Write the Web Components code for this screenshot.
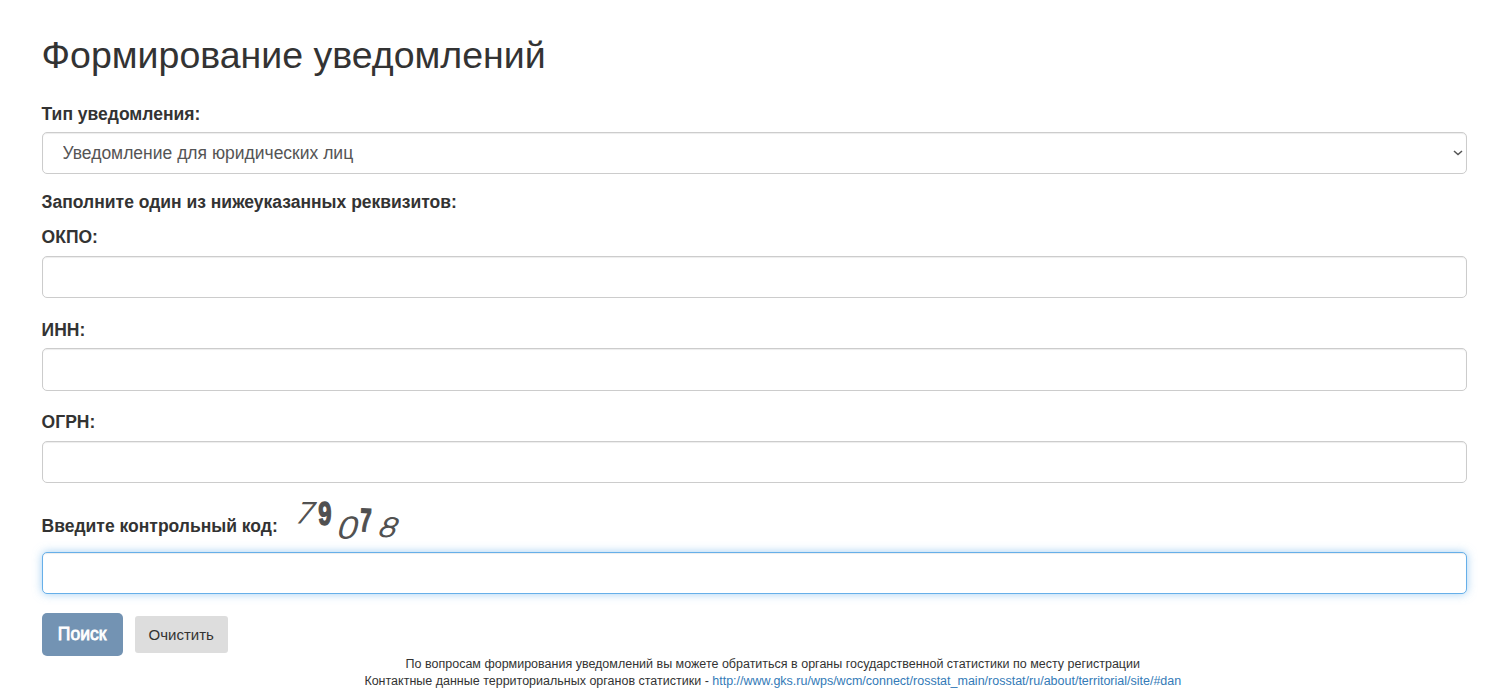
<!DOCTYPE html>
<html lang="ru">
<head>
<meta charset="utf-8">
<title>Формирование уведомлений</title>
<style>
    body {
        margin: 0;
        background: #fff;
        color: #333;
        font: 17.5px/25px "Liberation Sans", Arial, sans-serif;
    }
</style>
</head>
<body>
<notice-page></notice-page>

<script>
/**
 * Labelled form row; the control goes into the default slot,
 * anything beside the label goes into the "hint" slot
 */
class FormField extends HTMLElement {
    constructor() {
        super();
        this.attachShadow({ mode: 'open' });
        this.shadowRoot.innerHTML = `
            <style>
                :host {
                    display: block;
                    margin-bottom: 18.75px;
                }
                .head {
                    display: flex;
                    align-items: flex-end;
                    margin-bottom: 5.65px;
                }
                label {
                    padding: .6px 0 var(--label-lift, 0);
                    font-weight: bold;
                }
            </style>
            <div class="head"><label></label><slot name="hint"></slot></div>
            <slot></slot>
        `;
        this.shadowRoot.querySelector('label').textContent = this.getAttribute('label');
    }
}

/**
 * Single line text box
 * Usage: <text-input active></text-input>
 */
class TextInput extends HTMLElement {
    constructor() {
        super();
        this.attachShadow({ mode: 'open' });
        this.shadowRoot.innerHTML = `
            <style>
                :host { display: block; }
                input {
                    display: block;
                    box-sizing: border-box;
                    width: 100%;
                    height: 42.5px;
                    padding: 7.5px 15px;
                    border: 1px solid #ccc;
                    border-radius: 5px;
                    outline: none;
                    color: #555;
                    font: inherit;
                    box-shadow: inset 0 1px 1px rgba(0, 0, 0, .075);
                }
                :host([active]) input, input:focus {
                    border-color: #66afe9;
                    box-shadow: inset 0 1px 1px rgba(0, 0, 0, .075), 0 0 10px rgba(102, 175, 233, .6);
                }
            </style>
            <input type="text">
        `;
    }
}

/**
 * Drop-down list with its own chevron
 */
class SelectInput extends HTMLElement {
    constructor() {
        super();
        this.attachShadow({ mode: 'open' });
        this.shadowRoot.innerHTML = `
            <style>
                :host { display: grid; }
                select, svg { grid-area: 1 / 1; }
                select {
                    appearance: none;
                    box-sizing: border-box;
                    width: 100%;
                    height: 42px;
                    padding: 1px 20px 0;
                    border: 1px solid #ccc;
                    border-radius: 5px;
                    background: #fff;
                    color: #555;
                    font: inherit;
                    box-shadow: inset 0 1px 1px rgba(0, 0, 0, .075);
                }
                svg {
                    justify-self: end;
                    align-self: center;
                    margin-right: 4px;
                    pointer-events: none;
                }
            </style>
            <select><option></option></select>
            <svg width="10" height="6" viewBox="0 0 10 6" fill="none" stroke="#555" stroke-width="1.5">
                <path d="M1 1l4 3.6L9 1"/>
            </svg>
        `;
        this.shadowRoot.querySelector('option').textContent = this.getAttribute('value');
    }
}

/**
 * Control code: every digit has its own face and tilt
 */
class ControlCode extends HTMLElement {
    constructor() {
        super();
        this.attachShadow({ mode: 'open' });
        this.shadowRoot.innerHTML = `
            <style>
                :host { display: block; }
                svg { display: block; overflow: visible; }
                text { fill: #505050; stroke: #505050; font-family: "Liberation Sans", Arial, sans-serif; }
                .thin { font-family: "DejaVu Sans", sans-serif; font-weight: 200; stroke-width: 1; }
                .bold { font-weight: bold; stroke-width: 1.4; }
            </style>
            <svg width="125" height="47" viewBox="0 0 125 47">
                <text class="thin" font-size="28" transform="translate(14.500 24) skewX(-22) scale(1.06 1)">7</text>
                <text class="bold" font-size="32.500" transform="translate(40.300 26) scale(.73 1)">9</text>
                <text class="thin" font-size="28.500" transform="translate(56.500 38.500) skewX(-16) scale(1.24 1)">0</text>
                <text class="bold" font-size="32.500" transform="translate(81.500 32) rotate(3) scale(.62 1)">7</text>
                <text class="thin" font-size="26.500" transform="translate(97.500 36.500) rotate(6) skewX(-18) scale(1.15 1)">8</text>
            </svg>
        `;
    }
}

/**
 * Push button
 * Usage: <push-button primary>Text</push-button>
 */
class PushButton extends HTMLElement {
    constructor() {
        super();
        this.attachShadow({ mode: 'open' });
        this.shadowRoot.innerHTML = `
            <style>
                :host { display: block; }
                button {
                    display: block;
                    height: 37px;
                    padding: 0 14px 1px;
                    border: 0;
                    border-radius: 3px;
                    background: #ddd;
                    color: #333;
                    font: 15px/21px "Liberation Sans", Arial, sans-serif;
                }
                :host([primary]) button {
                    width: 81px;
                    height: 43px;
                    padding: 0;
                    border-radius: 5px;
                    background: #7393b3;
                    color: #fff;
                    font-size: 17.5px;
                    -webkit-text-stroke: .8px #fff;
                }
            </style>
            <button type="button"><slot></slot></button>
        `;
    }
}

/**
 * The whole form with heading and contacts
 */
class NoticePage extends HTMLElement {
    constructor() {
        super();
        this.attachShadow({ mode: 'open' });
        this.shadowRoot.innerHTML = `
            <style>
                :host {
                    display: block;
                    padding: 34.7px 25px 0 41.6px;
                }
                h1 {
                    margin: 0 0 25px;
                    font-size: 37.5px;
                    line-height: 41.25px;
                    font-weight: normal;
                }
                .note {
                    margin: -3px 0 9.5px;
                    font-weight: bold;
                }
                .code {
                    --label-lift: 7px;
                    margin-top: -2.7px;
                }
                .actions {
                    display: flex;
                    align-items: center;
                    gap: 12px;
                }
                footer {
                    padding-left: 37px;
                    font-size: 12.5px;
                    line-height: 17px;
                    text-align: center;
                }
                a { color: #337ab7; text-decoration: none; }
            </style>
            <h1>Формирование уведомлений</h1>
            <form-field label="Тип уведомления:">
                <select-input value="Уведомление для юридических лиц"></select-input>
            </form-field>
            <div class="note">Заполните один из нижеуказанных реквизитов:</div>
            <form-field label="ОКПО:"><text-input></text-input></form-field>
            <form-field label="ИНН:"><text-input></text-input></form-field>
            <form-field label="ОГРН:"><text-input></text-input></form-field>
            <form-field class="code" label="Введите контрольный код:">
                <control-code slot="hint"></control-code>
                <text-input active></text-input>
            </form-field>
            <div class="actions">
                <push-button primary>Поиск</push-button>
                <push-button>Очистить</push-button>
            </div>
            <footer>
                <div>По вопросам формирования уведомлений вы можете обратиться в органы государственной статистики по месту регистрации</div>
                <div>Контактные данные территориальных органов статистики - <a href="#dan">http://www.gks.ru/wps/wcm/connect/rosstat_main/rosstat/ru/about/territorial/site/#dan</a></div>
            </footer>
        `;
    }
}

customElements.define('form-field', FormField);
customElements.define('text-input', TextInput);
customElements.define('select-input', SelectInput);
customElements.define('control-code', ControlCode);
customElements.define('push-button', PushButton);
customElements.define('notice-page', NoticePage);
</script>
</body>
</html>
